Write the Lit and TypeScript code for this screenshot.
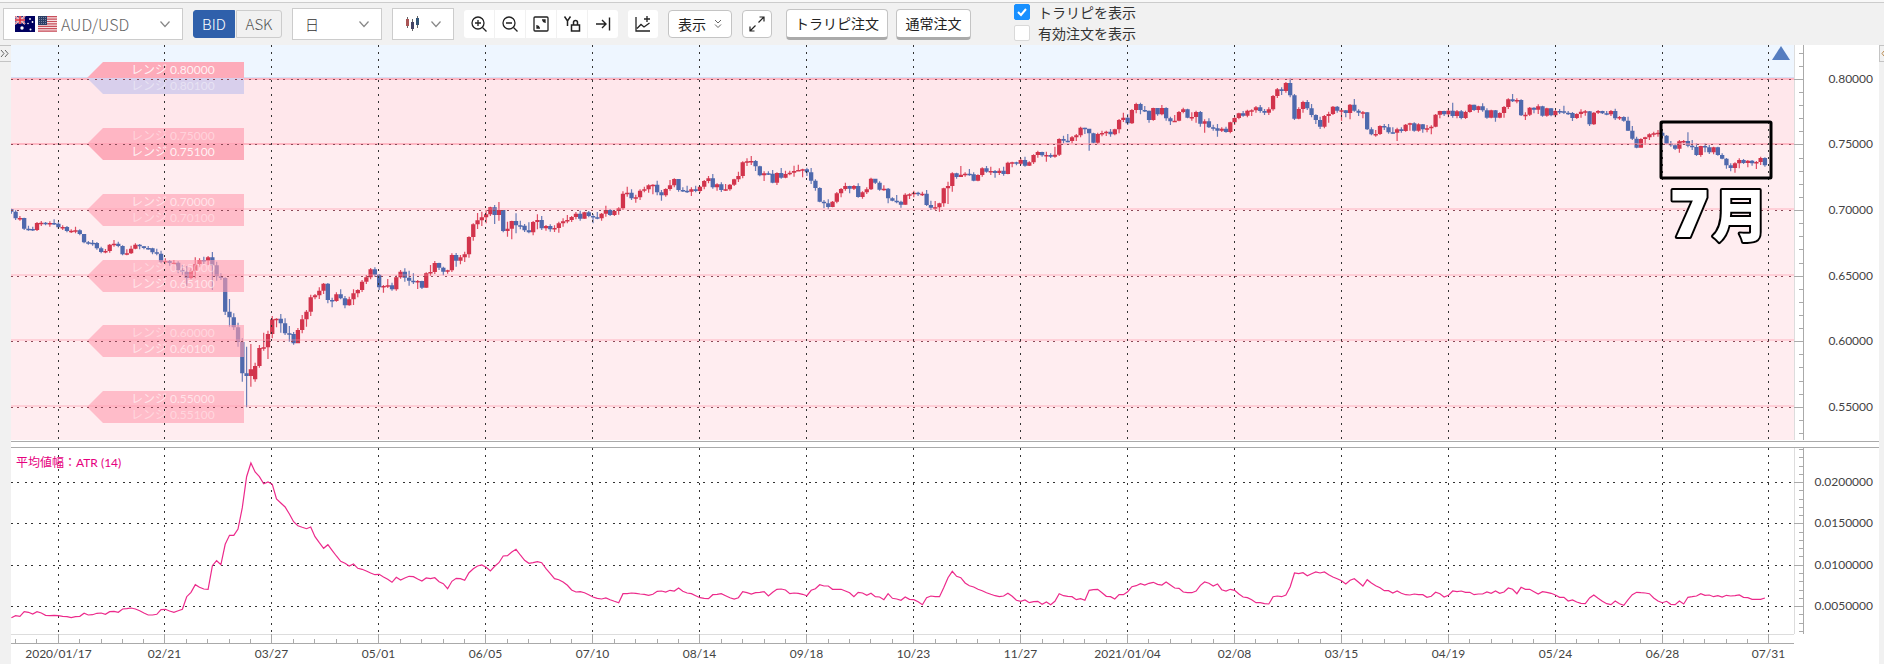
import { LitElement, html, svg, css } from "lit";
import { customElement } from "lit/decorators.js";

/* Candles, oldest first, written "close/high/low" in thirds of a pixel; each run has its own origin.
   A fourth number gives the open where it differs from the previous close. */
const RUNS: { base: number; bars: string }[] = [
  {
    base: 0,
    bars: `515/506/521 535/511/540 534/528/542 566/533/570 567/557/572 570/560/573 549/546/573 548/543/558 551/546/556 549/544/560
551/538/555 562/547/567 561/556/570 573/558/577 572/568/579 571/560/580 582/568/586 607/582/610 608/603/614 609/600/617
625/606/629 636/620/640 633/627/640 614/612/638 611/600/620 618/605/622 643/616/646 640/628/646 626/617/642 614/610/628
619/612/628 624/618/628 625/618/629 637/623/643 641/626/646 665/632/670 663/655/673 669/660/677 668/660/674 690/664/700
695/675/705 714/678/738 692/685/718 672/652/715 660/655/682 662/650/672 652/648/675 676/636/750 709/665/722 714/700/720
815/712/825 832/777/860 862/820/870 906/848/920 1000/895/1025 1008/920/1102 988/912/1040 978/968/1025/1018 924/915/983
922/878/932 882/872/957 838/828/895 836/835/862 850/822/878 880/835/885 882/858/905 910/876/914 870/864/908 838/825/880
815/810/860 772/764/828 766/762/778 752/742/777 731/729/762 780/729/790 783/773/802 763/757/785 775/748/778 796/768/805
778/770/797 760/748/795 750/748/772 725/720/756 712/705/732 688/684/718 704/682/710 742/702/750 738/735/758 736/717/744
748/728/752 712/706/752`,
  },
  {
    base: 180,
    bars: `515/510/536 533/505/545 542/512/557 547/520/552 543/540/567 563/542/567 520/517/563 516/495/527 489/483/522 503/488/510
515/500/526 511/509/521 465/460/516 482/459/500 472/465/493 463/455/486 411/409/473 373/370/422 361/339/387 352/335/378
343/330/370 322/320/348 345/315/372 330/306/362 393/330/397 386/365/410 363/362/418 376/340/400 377/362/388 391/372/396
397/367/400 366/363/406 360/343/388 385/348/390 378/375/392 388/373/395 384/376/396 370/365/398 364/355/380 360/345/370
351/348/366 341/336/358 356/332/362 337/335/356 348/333/352 352/342/370 355/336/358 341/339/362 330/317/350 345/327/348
333/332/348 325/322/344 281/274/330 278/260/290 295/268/300 292/284/308 272/268/300 268/260/277 256/253/278 254/253/283
277/242/286 286/270/302 267/265/290 256/240/272 237/235/262 270/237/275 272/262/276 275/257/279 268/262/288 273/257/277
260/258/278 243/240/268 235/228/250 262/222/266 253/250/272 270/247/276 268/252/273 254/252/272 238/236/258 228/215/246
187/184/235 184/175/198 183/168/195 199/180/213 226/197/229 220/214/243 221/214/225 248/210/250 219/217/255 233/204/236
222/212/235 218/212/226 213/197/230 210/194/213 208/206/232 217/203/228 242/204/252 264/238/272 305/262/307 310/300/325
321/298/328 305/303/322 280/276/310 267/264/292 258/248/272 266/257/280 258/255/270 291/250/293 277/274/296 268/262/282
236/233/270 248/238/252 269/244/272`,
  },
  {
    base: 60,
    bars: `386/376/392 415/384/430 422/412/424 425/405/430 434/422/443 404/400/434 403/400/417 398/392/412 402/395/408 401/395/408
435/390/438 443/422/450 442/423/450 430/428/455 385/383/440 378/365/432 340/337/395 351/338/356 344/318/350 341/337/350
343/327/347 362/337/364 345/343/364 325/322/350 335/318/338 333/320/345 339/330/353 332/325/345 342/320/347 308/305/343
307/305/322 311/305/316 300/294/315 317/290/320 307/304/318 285/283/312 276/272/293 286/275/290 285/275/305 290/280/294
284/260/293 237/235/288 242/227/250 243/222/247 232/228/250 226/222/243 203/200/232 206/203/222 220/212/272 248/218/250
222/218/252 219/212/229 215/212/228 223/207/230 208/206/226 180/177/220 173/158/186 190/162/195 150/147/192 132/128/160
150/128/163 152/138/156 180/152/188 144/143/182 163/144/167 144/135/166 175/142/182 184/170/195 182/165/186 156/153/184
148/143/160 173/146/175 171/157/182 156/152/188 191/153/200 184/178/218 202/175/204 205/194/212 212/192/230 206/202/216
216/200/218 187/185/220 174/170/195 160/158/178 167/153/170 152/149/172 151/148/168 142/138/158 153/135/158 158/147/165
148/142/165 108/105/152 88/84/114 93/82/105 69/66/98 106/55/112 176/102/180 147/142/178 126/122/158 145/120/150
165/132/172 180/163/192 200/170/207 168/165/205 162/155/188 140/138/165 152/138/158 151/147/182 159/150/172 134/132/178
152/117/155 158/148/168 157/153/175 208/156/210 223/202/226 222/210/230`,
  },
  {
    base: 0,
    bars: `258/256/285 262/252/270 277/252/281 278/262/281 268/263/303 273/262/278 254/252/275 250/248/272 272/247/275 253/250/275
268/252/278 265/255/277 260/256/283 224/222/262 213/212/235 223/212/228 212/205/232 228/188/233 214/210/235 234/210/238
216/212/237 194/192/218 210/194/213 199/197/218 211/190/215 233/205/236 211/209/235 233/210/245 219/217/235 201/198/233
178/175/207 184/162/186 180/175/190 226/178/228 224/217/240 203/201/228 209/202/220 199/193/222 227/197/230 205/203/230
226/205/229 213/210/232 214/207/222 218/197/222 219/213/225 234/216/243 222/220/237 215/208/233 214/210/227 253/213/258
218/216/255 213/210/222 220/212/222 223/213/226 213/210/228 235/206/240 231/228/240 242/229/245 272/230/273 296/258/300
323/290/325 297/295/322 292/290/315 283/280/300 280/275/290 278/270/290 287/273/297 311/285/313 316/303/320 326/312/330
304/300/338 303/300/310 317/277/322 321/300/330 345/310/348 318/317/350 322/310/337 337/315/342 322/320/343 345/320/347
356/340/358 376/354/386 384/370/394 370/367/398 360/355/385 369/357/372 362/360/382 370/360/377 366/363/387 354/350/375
376/352/380`,
  },
];

/* ATR values, one per candle, in thirds of a pixel. */
const ATR = `563 557 559 545 547 552 545 549 556 557 556 557 559 560 563 560 559 550 555 554 550 549 553 545 544 547 537 536 534 537 542 549
555 555 553 539 538 543 547 542 538 500 487 464 472 477 478 407 392 404 343 316 316 297 233 140 99 126 140 161 156 163 207 219 231
252 275 287 292 296 291 320 338 355 344 361 378 394 400 408 402 415 418 423 429 434 433 441 448 457 442 450 444 439 440 447 453
444 446 443 455 461 476 454 445 446 451 428 416 408 405 412 423 409 398 378 377 366 358 375 391 400 398 395 398 416 431 446 449
456 466 480 486 485 488 494 501 505 507 504 509 514 518 491 491 489 490 492 493 496 493 484 483 486 481 483 474 484 489 491 497
503 505 506 494 493 491 497 503 507 503 485 488 492 488 487 485 498 487 478 477 480 491 489 490 493 497 481 476 464 468 468 478
478 478 483 488 500 487 489 496 490 500 501 509 491 505 507 511 501 508 509 515 524 503 498 500 500 473 443 424 439 443 459 467
471 478 482 488 493 497 500 498 490 499 511 514 510 518 515 514 523 516 524 514 491 497 499 500 509 506 511 481 479 478 488 499
500 507 494 494 485 470 467 461 465 460 457 463 465 456 465 474 475 486 488 488 483 466 456 460 468 462 479 483 478 481 492 501
503 509 518 518 521 522 500 498 500 495 470 429 431 428 437 431 426 429 426 434 441 446 452 462 451 446 457 468 449 459 467 473
482 482 489 483 490 494 495 492 494 494 502 499 487 491 501 496 483 485 483 487 487 494 492 492 486 490 483 490 486 474 478 491
472 478 478 485 492 485 487 490 495 502 502 513 510 516 520 521 504 495 505 514 521 524 513 521 526 509 494 487 488 489 491 504
513 518 514 523 524 513 522 502 500 498 491 496 495 500 497 501 496 498 497 495 502 503 508 508 508 504`
  .trim()
  .split(/\s+/)
  .map((v) => Number(v) / 3 - 18);

const PLOT_W = 1783;
const MAIN_H = 396;
const SUB_H = 186;
const STEP = 4.277;
const FIRST = 11;
const xAt = (i: number) => 47.4 + STEP * i;
const pct = (x: number) => `${(x / PLOT_W) * 100}%`;

const DATES = ["2020/01/17", "02/21", "03/27", "05/01", "06/05", "07/10", "08/14", "09/18", "10/23", "11/27", "2021/01/04", "02/08", "03/15", "04/19", "05/24", "06/28", "07/31"];
const DATE_X = DATES.map((_, k) => (k === 0 ? 47.5 : k === 16 ? 1757.5 : 46.5 + 107 * k));
const PRICES = [0.8, 0.75, 0.7, 0.65, 0.6, 0.55];
const priceY = (p: number) => Math.floor(34.4 + (0.8 - p) * 1311.3) + 0.5;
const ATR_LEVELS = [0.02, 0.015, 0.01, 0.005];
const atrY = (v: number) => Math.floor(34.6 + (0.02 - v) * 8267) + 0.5;

function candlePaths() {
  const out = { upBody: "", upWick: "", downBody: "", downWick: "" };
  let i = -FIRST;
  let prev = 507;
  for (const run of RUNS) {
    for (const bar of run.bars.trim().split(/\s+/)) {
      const [c, h, l, o] = bar.split("/").map((n) => Number(n) + run.base);
      const open = o ?? prev;
      const up = c < open;
      const y = (v: number) => v / 3 - 5;
      const x = xAt(i);
      const top = y(Math.min(c, open));
      const height = Math.max(1.5, Math.abs(c - open) / 3);
      const body = `M${(x - 2.15).toFixed(2)} ${top.toFixed(2)}h4.3v${height.toFixed(2)}h-4.3z`;
      const wick = `M${x.toFixed(2)} ${y(h).toFixed(2)}V${y(l).toFixed(2)}`;
      if (up) {
        out.upBody += body;
        out.upWick += wick;
      } else {
        out.downBody += body;
        out.downWick += wick;
      }
      prev = c;
      i++;
    }
  }
  return out;
}

const CANDLES = candlePaths();
const ATR_PATH = ATR.map((v, k) => `${k ? "L" : "M"}${xAt(k - FIRST).toFixed(1)} ${v.toFixed(1)}`).join("");

const TAGS = [
  { y: 33, upper: "0.80000", lower: "0.80100", upFill: "#fdabba", lowFill: "#d8cfec", upText: 0.85, lowText: 0.4 },
  { y: 99, upper: "0.75000", lower: "0.75100", upFill: "#ff9db0a8", lowFill: "#fdabba", upText: 0.4, lowText: 0.85 },
  { y: 165, upper: "0.70000", lower: "0.70100", upFill: "#ff9db09c", lowFill: "#ff9db09c", upText: 0.6, lowText: 0.4 },
  { y: 231, upper: "0.65000", lower: "0.65100", upFill: "#ff9db09c", lowFill: "#ff9db09c", upText: 0.4, lowText: 0.6 },
  { y: 296, upper: "0.60000", lower: "0.60100", upFill: "#ff9db09c", lowFill: "#ff9db09c", upText: 0.4, lowText: 0.6 },
  { y: 362, upper: "0.55000", lower: "0.55100", upFill: "#ff9db09c", lowFill: "#ff9db09c", upText: 0.6, lowText: 0.4 },
];

const chevron = html`<svg class="chevron" width="10" height="8" viewBox="0 0 10 8"><path d="M.5 1.5 5 6.5 9.5 1.5" fill="none" stroke="#888" stroke-width="1.2" /></svg>`;

@customElement("chart-toolbar")
export class ChartToolbar extends LitElement {
  static styles = css`
    :host {
      display: block;
      background: #f1f1f1;
      border-top: 1px solid #ccc;
      margin-top: 2px;
      font: 14px/18px "Noto Sans CJK JP", sans-serif;
      font-weight: 300;
      color: #222;
    }
    .bar { display: flex; align-items: center; height: 42px; padding: 0 3px; }
    .box {
      display: flex; align-items: center; box-sizing: border-box;
      height: 32px; background: #fff; border: 1px solid #ccc; margin-right: 10px;
    }
    .pair { width: 180px; padding: 0 12px 0 11px; gap: 3px; }
    .period { width: 90px; padding: 0 12px; }
    .style { width: 62px; padding: 0 12px; justify-content: space-between; }
    .flag { flex: none; }
    .chevron { flex: none; }
    select {
      appearance: none; border: 0; background: none; padding: 0 0 0 1px; margin: 0;
      flex: 1; min-width: 0; height: 28px; color: #666;
      font: 300 16px/24px "Noto Sans CJK JP", sans-serif;
    }
    .period select { font-size: 14px; padding: 0; color: #333; }
    button { font: inherit; color: inherit; margin: 0; padding: 0; cursor: pointer; }
    .sides { display: flex; width: 89px; height: 28px; margin-right: 10px; }
    .side { flex: 1; border: 1px solid #ccc; border-radius: 0 3px 3px 0; background: #f1f1f1; color: #555; font-size: 15px; }
    .side.on { background: #2f60ab; border-color: #2f60ab; color: #fff; border-radius: 3px 0 0 3px; margin-right: 1px; flex: none; width: 42px; }
    .tools { display: flex; gap: 1px; height: 28px; margin-right: 10px; }
    .tool { width: 30px; height: 28px; border: 0; background: #fff; display: grid; place-items: center; }
    .tool:first-child { border-radius: 3px 0 0 3px; }
    .tool:last-child { border-radius: 0 3px 3px 0; }
    .tool:only-child { border-radius: 3px; }
    .btn {
      box-sizing: border-box; height: 28px; background: #fff; border: 1px solid #c4c4c4; border-radius: 4px;
      display: flex; align-items: center; justify-content: center; gap: 8px; margin-right: 10px;
      font-weight: 400; color: #222;
    }
    .show { width: 64px; }
    .full { width: 30px; margin-right: 14px; }
    .order { height: 31px; border-bottom: 3px solid #aaa; margin-right: 8px; }
    .wide { width: 102px; }
    .mid { width: 75px; }
    .checks { display: flex; flex-direction: column; gap: 3px; margin: 0 0 3px 35px; }
    .check { display: flex; align-items: center; gap: 8px; height: 18px; font-weight: 400; color: #333; }
    .check input {
      appearance: none; box-sizing: border-box; width: 16px; height: 16px; margin: 0;
      background: #fff; border: 1px solid #d9d9d9; border-radius: 2px;
    }
    .check input:checked { border-color: #1890ff; background: #1890ff; }
    .mark { display: grid; }
    .mark > * { grid-area: 1 / 1; }
    .mark svg { pointer-events: none; }
  `;

  render() {
    return html`
      <div class="bar" role="toolbar" aria-label="チャート">
        <div class="box pair">
          <svg class="flag" width="20" height="16" viewBox="0 0 20 16">
            <rect width="20" height="16" fill="#00005f" />
            <path d="M0 0 10 8M10 0 0 8" stroke="#fff" stroke-width="1.8" />
            <path d="M0 0 10 8M10 0 0 8" stroke="#e0202c" stroke-width=".7" />
            <path d="M5 0V8M0 4H10" stroke="#f4c6cc" stroke-width="2.8" />
            <path d="M5 0V8M0 4H10" stroke="#e0303c" stroke-width="1.6" />
            <g fill="#fff"><circle cx="7" cy="12" r="1.7" /><circle cx="15" cy="3" r=".9" /><circle cx="17.5" cy="6" r=".9" /><circle cx="13" cy="7.5" r=".8" /><circle cx="15.5" cy="13.5" r="1" /></g>
          </svg>
          <svg class="flag" width="19" height="16" viewBox="0 0 19 16">
            <rect width="19" height="16" fill="#f7dfe1" />
            <path d="M0 .7H19M0 3.1H19M0 5.5H19M0 7.9H19M0 10.3H19M0 12.7H19M0 15.1H19" stroke="#c8505c" stroke-width="1.2" />
            <rect width="9" height="9" fill="#2c3e66" />
            <path d="M1 1.5H8M1 3.5H8M1 5.5H8M1 7.5H8" stroke="#8b97b0" stroke-width=".8" stroke-dasharray="1 1" />
          </svg>
          <select aria-label="通貨ペア"><option>AUD/USD</option></select>
          ${chevron}
        </div>
        <div class="sides">
          <button class="side on" aria-pressed="true">BID</button>
          <button class="side" aria-pressed="false">ASK</button>
        </div>
        <div class="box period">
          <select aria-label="足種"><option>日</option></select>
          ${chevron}
        </div>
        <button class="box style" aria-label="チャート種類" aria-haspopup="listbox">
          <svg width="16" height="18" viewBox="0 0 16 18" stroke-width="1">
            <path d="M2.5 2v11M7.5 4v12M12.5 1v12" stroke="#666" />
            <path d="M1 4h3v7H1z" fill="#a55" /><path d="M6 7h3v7H6z" fill="#446" /><path d="M11 3h3v7h-3z" fill="#357" />
          </svg>
          ${chevron}
        </button>
        <div class="tools">
          <button class="tool" aria-label="拡大"><svg width="18" height="18" viewBox="0 0 18 18" fill="none" stroke="#222" stroke-width="1.3"><circle cx="8" cy="8" r="6" /><path d="M12.5 12.5 16.5 16.5M8 5v6M5 8h6" /></svg></button>
          <button class="tool" aria-label="縮小"><svg width="18" height="18" viewBox="0 0 18 18" fill="none" stroke="#222" stroke-width="1.3"><circle cx="8" cy="8" r="6" /><path d="M12.5 12.5 16.5 16.5M5 8h6" /></svg></button>
          <button class="tool" aria-label="範囲"><svg width="18" height="18" viewBox="0 0 18 18" fill="none" stroke="#222" stroke-width="1.3"><rect x="2" y="2" width="14" height="14" rx="1" /><path d="M10 5h3v3M5 10v3h3M13 5l-2 2M5 13l2-2" /></svg></button>
          <button class="tool" aria-label="Y軸固定"><svg width="18" height="18" viewBox="0 0 18 18" fill="none" stroke="#222" stroke-width="1.5"><path d="M1.5 1.5 4.5 6 7.5 1.5M4.5 6V11M8.5 10h8v6h-8zM10.5 10V7.5a2 2 0 0 1 4 0V10" /></svg></button>
          <button class="tool" aria-label="最新へ"><svg width="18" height="18" viewBox="0 0 18 18" fill="none" stroke="#222" stroke-width="1.4"><path d="M2 9h10M8 5l4 4-4 4M15.5 2.5v13" /></svg></button>
        </div>
        <div class="tools">
          <button class="tool" aria-label="指標追加"><svg width="18" height="18" viewBox="0 0 18 18" fill="none" stroke="#222" stroke-width="1.3"><path d="M2 2v14H16M3 13.5 7 9.5 10 12 15.5 8M13 1v6M10 4h6" /></svg></button>
        </div>
        <button class="btn show">表示<svg width="8" height="10" viewBox="0 0 8 10" fill="none" stroke="#666"><path d="M1 1 4 4 7 1M1 5.5 4 8.5 7 5.5" /></svg></button>
        <button class="btn full" aria-label="全画面"><svg width="16" height="16" viewBox="0 0 16 16" fill="none" stroke="#222" stroke-width="1.2"><path d="M9.5 6.5 15 1M10.5 1H15v4.5M6.5 9.5 1 15M1 10.5V15h4.5" /></svg></button>
        <button class="btn order wide">トラリピ注文</button>
        <button class="btn order mid">通常注文</button>
        <div class="checks">
          <label class="check"><span class="mark"><input type="checkbox" checked /><svg width="16" height="16" viewBox="0 0 16 16"><path d="M4 8 7 11 12 5" fill="none" stroke="#fff" stroke-width="2" /></svg></span>トラリピを表示</label>
          <label class="check"><input type="checkbox" />有効注文を表示</label>
        </div>
      </div>
    `;
  }
}

@customElement("price-chart")
export class PriceChart extends LitElement {
  static styles = css`
    :host { display: grid; grid-template-columns: 11px minmax(0, 1fr) 85px 5px; background: #fff; font: 12px Lato, "Noto Sans CJK JP", sans-serif; }
    .rail { grid-row: 1 / 5; background: #f1f1f1; }
    .left { grid-column: 1; }
    .right { grid-column: 4; }
    .toggle {
      display: block; box-sizing: border-box; width: 100%; height: 17px; padding: 0; border: solid #c4c4c4;
      border-width: 1px 0; background: #f1f1f1; line-height: 0; overflow: hidden;
    }
    .right .toggle { border-left-width: 1px; }
    svg { display: block; }
    .plot, .axis { width: 100%; overflow: hidden; }
    .plot { grid-column: 2; }
    .axis { grid-column: 3; }
    .main { height: 396px; }
    .sub { height: 186px; }
    .time { height: 30px; }
    .divider { grid-column: 2 / 4; box-sizing: border-box; height: 7px; border: solid #aaa; border-width: 1px 0; }
    text { fill: #444; }
    .grid { stroke: #333; stroke-width: 1; stroke-dasharray: 2 5; shape-rendering: crispEdges; }
    .hgrid { stroke: #333; stroke-width: 1; stroke-dasharray: 2 4 2 6; shape-rendering: crispEdges; }
    .soft { stroke: #8d4a58; }
    .tick { stroke: #aaa; shape-rendering: crispEdges; }
    .light { stroke: #ddd; shape-rendering: crispEdges; }
    .tag { fill: #fff; }
    .indicator { fill: #e6007e; }
    .month { font: 900 56px "Noto Sans CJK JP", sans-serif; fill: #fff; stroke: #000; stroke-width: 4; paint-order: stroke; stroke-linejoin: round; }
    .digit { font: 800 66px "Open Sans", sans-serif; }
  `;

  private vertical(h: number) {
    return DATE_X.map((x) => svg`<line class="grid" x1=${pct(x)} x2=${pct(x)} y1="0" y2=${h} />`);
  }

  private mainPlot() {
    const frame = `0 0 ${PLOT_W} ${MAIN_H}`;
    return html`<svg class="plot main" role="img" aria-label="AUD/USD 日足">
      <rect width="100%" height="33" fill="#eef6ff" />
      <rect y="32" width="100%" height="1" fill="#d3def4" />
      <rect y="33" width="100%" height="66" fill="#ffe7eb" />
      <rect y="99" width="100%" height="296" fill="#ffedf0" />
      <svg width="100%" height=${MAIN_H} viewBox=${frame} preserveAspectRatio="none">
        <path d=${CANDLES.upWick} stroke="#d9304a" stroke-width="1.2" stroke-opacity=".85" />
        <path d=${CANDLES.downWick} stroke="#4c66ac" stroke-width="1.2" stroke-opacity=".85" />
        <path d=${CANDLES.upBody} fill="#d2344c" />
        <path d=${CANDLES.downBody} fill="#4f69ad" />
      </svg>
      ${PRICES.map((p, k) => svg`<rect y=${Math.floor(priceY(p)) - (k < 2 ? 1 : 2)} width="100%" height="2" fill="#ff8fa3" fill-opacity=${k < 2 ? 0.55 : 0.3} />`)}
      ${TAGS.map(
        (t) => svg`
        <path d="M76 ${t.y} 92 ${t.y - 16}H233V${t.y}z" fill=${t.upFill} />
        <path d="M76 ${t.y} 92 ${t.y + 16}H233V${t.y}z" fill=${t.lowFill} />
        <text class="tag" x="120" y=${t.y - 4} fill-opacity=${t.upText}>レンジ ${t.upper}</text>
        <text class="tag" x="120" y=${t.y + 12} fill-opacity=${t.lowText}>レンジ ${t.lower}</text>`
      )}
      ${PRICES.map((p) => svg`<line class="hgrid soft" x1="0" x2="100%" y1=${priceY(p)} y2=${priceY(p)} />`)}
      ${this.vertical(395)}
      <svg x="100%" overflow="visible">
        <path d="M-22 15 -13 1 -4 15z" fill="#557dc0" />
        <rect x="-133" y="77" width="110" height="56" rx="1" fill="none" stroke="#000" stroke-width="3" />
        <text class="month" x="-124" y="192"><tspan class="digit">7</tspan><tspan x="-82" y="191">月</tspan></text>
      </svg>
    </svg>`;
  }

  private mainAxis() {
    const minor = Array.from({ length: 30 }, (_, k) => Math.floor(8.2 + 13.113 * k) + 0.5);
    return html`<svg class="axis main">
      <line class="light" x1=".5" x2=".5" y1="0" y2="395" />
      <line class="tick" x1="9.5" x2="9.5" y1="0" y2="395" />
      ${minor.map((y) => svg`<line class="tick" x1="5" x2="10" y1=${y} y2=${y} />`)}
      ${PRICES.map((p) => svg`<line class="tick" x1="0" x2="10" y1=${priceY(p)} y2=${priceY(p)} /><text x="79" y=${Math.floor(priceY(p)) + 4} text-anchor="end">${p.toFixed(5)}</text>`)}
    </svg>`;
  }

  private subPlot() {
    const frame = `0 0 ${PLOT_W} ${SUB_H}`;
    return html`<svg class="plot sub" role="img" aria-label="ATR">
      ${ATR_LEVELS.map((v) => svg`<line class="hgrid" x1="0" x2="100%" y1=${atrY(v)} y2=${atrY(v)} />`)}
      ${this.vertical(SUB_H)}
      <svg width="100%" height=${SUB_H} viewBox=${frame} preserveAspectRatio="none">
        <path d=${ATR_PATH} fill="none" stroke="#ec2a8b" stroke-width="1.2" />
      </svg>
      <text class="indicator" x="5" y="19">平均値幅：ATR (14)</text>
    </svg>`;
  }

  private subAxis() {
    const minor = Array.from({ length: 23 }, (_, k) => Math.floor(1.5 + 8.267 * k) + 0.5);
    return html`<svg class="axis sub">
      <line class="light" x1=".5" x2=".5" y1="0" y2="186" />
      <line class="tick" x1="9.5" x2="9.5" y1="0" y2="186" />
      ${minor.map((y) => svg`<line class="tick" x1="5" x2="10" y1=${y} y2=${y} />`)}
      ${ATR_LEVELS.map((v) => svg`<line class="tick" x1="0" x2="10" y1=${atrY(v)} y2=${atrY(v)} /><text x="79" y=${Math.floor(atrY(v)) + 4} text-anchor="end">${v.toFixed(7)}</text>`)}
    </svg>`;
  }

  private timeAxis() {
    const minor = Array.from({ length: 83 }, (_, k) => Math.floor(4.5 + 21.386 * k) + 0.5);
    return html`<svg class="plot time">
      <line class="light" x1="0" x2="100%" y1=".5" y2=".5" />
      ${minor.filter((_, k) => k % 5 !== 2).map((x) => svg`<line class="tick" x1=${pct(x)} x2=${pct(x)} y1="5" y2="10" />`)}
      ${DATES.map((d, k) => svg`<line class="tick" x1=${pct(DATE_X[k])} x2=${pct(DATE_X[k])} y1="0" y2="10" /><text x=${pct(DATE_X[k])} y="24" text-anchor="middle">${d}</text>`)}
      <line class="tick" x1="0" x2="100%" y1="9.5" y2="9.5" />
    </svg>`;
  }

  render() {
    return html`
      <div class="rail left"><button class="toggle" aria-label="開く"><svg width="10" height="15" viewBox="0 0 10 15" fill="none" stroke="#666"><path d="M1 4 4 7.5 1 11M5 4 8 7.5 5 11" /></svg></button></div>
      ${this.mainPlot()}${this.mainAxis()}
      <div class="rail right"><button class="toggle" aria-label="閉じる"><svg width="4" height="15" viewBox="0 0 4 15" fill="none" stroke="#b98a50"><path d="M4 5 2 7.5 4 10" /></svg></button></div>
      <div class="divider"></div>
      ${this.subPlot()}${this.subAxis()}
      ${this.timeAxis()}
    `;
  }
}

@customElement("app-root")
export class AppRoot extends LitElement {
  static styles = css`
    :host { display: flow-root; background: #f8f8f8; }
  `;

  render() {
    return html`<chart-toolbar></chart-toolbar><price-chart></price-chart>`;
  }
}
